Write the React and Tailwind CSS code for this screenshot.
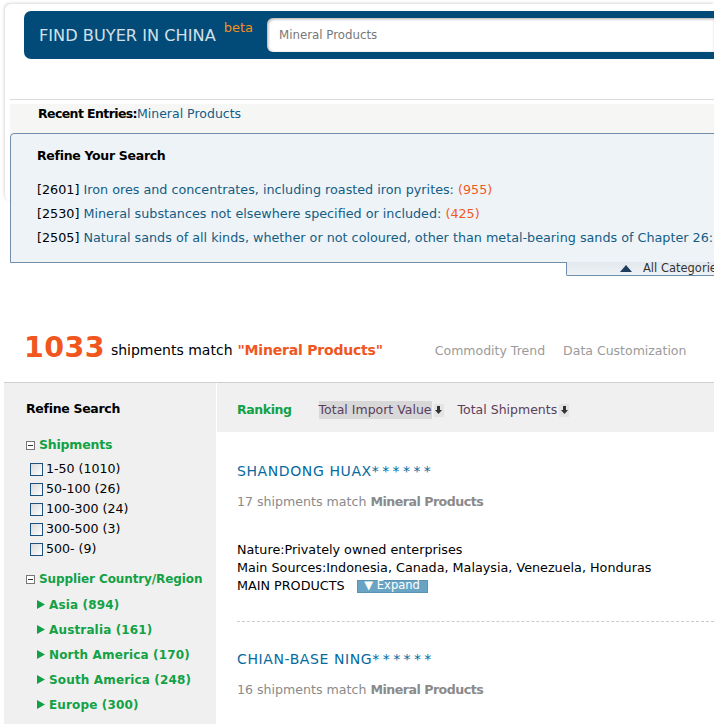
import React from "react";

const F = "font-['Verdana','DejaVu_Sans',sans-serif]";

function MinusBox() {
  return (
    <span className="inline-flex w-[9px] h-[9px] border border-[#777] bg-white items-center justify-center mr-[4px] shrink-0">
      <span className="w-[5px] h-[1px] bg-[#333]" />
    </span>
  );
}

function Check() {
  return <span className="inline-block w-[13px] h-[13px] border border-[#1d4f7f] bg-gradient-to-br from-[#d9d9d9] to-white mr-[3px] shrink-0" />;
}

function Tri() {
  return (
    <svg width="8" height="9" viewBox="0 0 8 9" className="mr-[4px] shrink-0">
      <path d="M0 0 L8 4.5 L0 9 Z" fill="#11a047" />
    </svg>
  );
}

function DownArrow() {
  return (
    <span className="inline-flex items-center justify-center w-[10px] h-[13px] bg-[#e4e4e4] ml-[2px]">
      <svg width="7" height="8" viewBox="0 0 7 8">
        <path d="M2 0 H5 V4 H7 L3.5 8 L0 4 H2 Z" fill="#333" />
      </svg>
    </span>
  );
}

function Company({ name }) {
  return (
    <div className="text-[14px] text-[#056a9f] h-[18px] flex items-center tracking-[0.6px] whitespace-nowrap">
      {name}
      <span className="tracking-[3.4px]">******</span>
    </div>
  );
}

export default function App() {
  const refine = [
    ["2601", "Iron ores and concentrates, including roasted iron pyrites:", "(955)"],
    ["2530", "Mineral substances not elsewhere specified or included:", "(425)"],
    ["2505", "Natural sands of all kinds, whether or not coloured, other than metal-bearing sands of Chapter 26:", ""],
  ];
  const ships = ["1-50 (1010)", "50-100 (26)", "100-300 (24)", "300-500 (3)", "500- (9)"];
  const regions = ["Asia (894)", "Australia (161)", "North America (170)", "South America (248)", "Europe (300)"];
  return (
    <div className={`w-[714px] h-[724px] overflow-hidden bg-white ${F} text-[12px] text-black`}>
      {/* top card */}
      <div className="pt-[4px] pl-[5px]">
        <div className="h-[197px] bg-white rounded-tl-[6px] rounded-bl-[6px] shadow-[-1px_-1px_3px_rgba(0,0,0,0.15)] pt-[7px]">
          <div className="ml-[19px] h-[48px] bg-[#024a77] rounded-l-[7px] flex items-center">
            <div className="pl-[15px] w-[243px] flex items-center h-full">
              <span className="text-[16.2px] text-[#d3e0ea] mt-[2px] whitespace-nowrap">FIND BUYER IN CHINA</span>
              <span className="text-[13px] text-[#f7901e] ml-[8px] -mt-[14px]">beta</span>
            </div>
            <div className="flex-1 h-[34px] bg-white rounded-l-[6px] shadow-[inset_1px_1px_3px_rgba(0,0,0,0.35)] flex items-center pl-[12px] pt-[1px] text-[11.8px] text-[#777]">
              Mineral Products
            </div>
          </div>
          <div className="mt-[40px] ml-[5px] h-[1px] bg-[#d9d9d9]" />
          <div className="mt-[4px] ml-[5px] h-[30px] bg-[#f6f7f5] flex items-start pt-[1px] pl-[28px] text-[12.5px]">
            <span className="font-bold tracking-[-0.6px]">Recent Entries:</span>
            <span className="text-[#125c86]">Mineral Products</span>
          </div>
        </div>
      </div>

      {/* refine box */}
      <div className="relative -mt-[68px] ml-[10px] mr-[-20px]">
        <div className="h-[130px] border border-[#6f8eac] bg-[#eef3f7] rounded-tl-[4px] pl-[26px] pt-[13px]">
          <div className="font-bold text-[12.5px] h-[18px] flex items-center tracking-[-0.3px]">Refine Your Search</div>
          <div className="mt-[13px] text-[12.75px] leading-[24px]">
            {refine.map(([c, t, n]) => (
              <div key={c} className="whitespace-nowrap">
                [{c}] <span className="text-[#135d85]">{t}</span>
                {n && <span className="text-[#f05a22]"> {n}</span>}
              </div>
            ))}
          </div>
        </div>
        <div className="ml-[556px] -mt-[1px] h-[14px] border-l border-b border-[#6f8eac] bg-gradient-to-b from-[#e2e8ed] to-[#eef2f5] flex items-center pl-[53px] text-[11.5px] text-[#333] rounded-bl-[2px] whitespace-nowrap">
          <svg width="12" height="7" viewBox="0 0 12 7" className="mr-[11px] shrink-0">
            <path d="M0 7 L6 0 L12 7 Z" fill="#1f3d5c" />
          </svg>
          All Categories
        </div>
      </div>

      {/* result count */}
      <div className="mt-[51px] ml-[24px] flex items-end h-[36px] whitespace-nowrap">
        <span className="text-[28.5px] font-bold text-[#f0561d] leading-[30px] tracking-[0.4px]">1033</span>
        <span className="text-[14px] ml-[6px] mb-[2px]">shipments match</span>
        <span className="text-[14px] ml-[5px] mb-[2px] font-bold text-[#f0561d] tracking-[-0.2px]">"Mineral Products"</span>
        <span className="text-[12.5px] ml-[52px] mb-[2px] text-[#9a9a9a]">Commodity Trend</span>
        <span className="text-[12.5px] ml-[18px] mb-[2px] text-[#9a9a9a]">Data Customization</span>
      </div>

      <div className="mt-[19px] ml-[4px] h-[1px] bg-[#cfcfcf]" />

      <div className="ml-[4px] flex gap-[1px]">
        {/* sidebar */}
        <div className="w-[212px] h-[360px] bg-[#f0f0f0] pl-[22px] pt-[18px]">
          <div className="font-bold text-[12.5px] h-[16px] flex items-center tracking-[-0.3px]">Refine Search</div>
          <div className="mt-[20px] flex items-center font-bold text-[12.5px] text-[#12a145] h-[16px] tracking-[-0.2px]">
            <MinusBox />
            Shipments
          </div>
          <div className="mt-[6px] pl-[4px]">
            {ships.map((s) => (
              <div key={s} className="h-[20px] flex items-center text-[12.6px]">
                <Check />
                {s}
              </div>
            ))}
          </div>
          <div className="mt-[12px] flex items-center font-bold text-[12px] text-[#12a145] h-[16px] whitespace-nowrap tracking-[-0.1px]">
            <MinusBox />
            Supplier Country/Region
          </div>
          <div className="pl-[11px] mt-[5px]">
            {regions.map((r) => (
              <div key={r} className="h-[25px] flex items-center font-bold text-[12px] text-[#12a145] tracking-[0.15px] whitespace-nowrap">
                <Tri />
                {r}
              </div>
            ))}
          </div>
        </div>

        {/* main */}
        <div className="flex-1">
          <div className="h-[49px] bg-[#f0f0f0] flex items-center pl-[20px] pt-[5px] text-[12.5px] whitespace-nowrap">
            <span className="font-bold text-[#12a145] tracking-[-0.4px]">Ranking</span>
            <span className="ml-[27px] bg-[#d8d8d8] text-[#5b3f5b]">Total Import Value</span>
            <DownArrow />
            <span className="ml-[14px] text-[#5b3f5b]">Total Shipments</span>
            <DownArrow />
          </div>
          <div className="pl-[20px]">
            <div className="mt-[30px]">
              <Company name="SHANDONG HUAX" />
            </div>
            <div className="mt-[14px] text-[12.6px] text-[#8a8a8a] h-[16px] flex items-center whitespace-nowrap">
              17 shipments match&nbsp;<span className="font-bold tracking-[-0.5px]">Mineral Products</span>
            </div>
            <div className="mt-[31px] text-[12.75px] leading-[18px] whitespace-nowrap">
              <div>Nature:Privately owned enterprises</div>
              <div>Main Sources:Indonesia, Canada, Malaysia, Venezuela, Honduras</div>
              <div className="flex items-center">
                MAIN PRODUCTS
                <span className="ml-[12px] w-[71px] h-[13px] bg-[#6aa4c5] border border-[#5b93b5] text-white text-[11.5px] flex items-center justify-center leading-none">
                  ▼ Expand
                </span>
              </div>
            </div>
            <div className="mt-[26px] border-t border-dashed border-[#cccccc]" />
            <div className="mt-[28px]">
              <Company name="CHIAN-BASE NING" />
            </div>
            <div className="mt-[14px] text-[12.6px] text-[#8a8a8a] h-[16px] flex items-center whitespace-nowrap">
              16 shipments match&nbsp;<span className="font-bold tracking-[-0.5px]">Mineral Products</span>
            </div>
          </div>
        </div>
      </div>
    </div>
  );
}
